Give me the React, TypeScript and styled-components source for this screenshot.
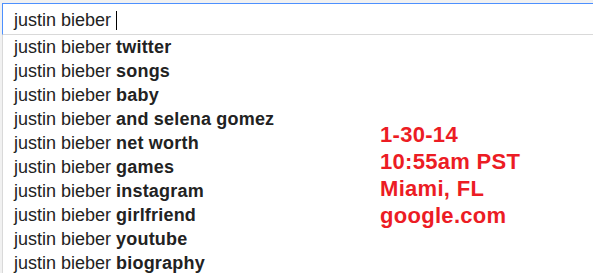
import React from "react";
import styled, { createGlobalStyle } from "styled-components";

const Global = createGlobalStyle`
  html, body { margin: 0; padding: 0; background: #fff; }
  body { font-family: Arial, "Liberation Sans", sans-serif; }
`;

const Page = styled.div`
  position: relative;
  width: 593px;
  height: 273px;
  overflow: hidden;
  background: #f1f1f1;
  padding: 3px 0 0 2px;
  box-sizing: border-box;
`;

const Panel = styled.div`
  background: #fff;
  display: flex;
  flex-direction: column;
  height: 100%;
`;

const SearchBox = styled.div`
  height: 32px;
  flex: none;
  box-sizing: border-box;
  padding: 2px 0 0 11px;
  border-top: 1px solid #4d90fe;
  border-left: 1px solid #4d90fe;
  border-bottom: 1px solid #d9d9d9;
  display: flex;
  align-items: center;
  font-size: 18px;
  color: #222;
`;

const Caret = styled.span`
  display: inline-block;
  width: 1px;
  height: 19px;
  background: #000;
  margin-left: 5px;
`;

const List = styled.ul`
  list-style: none;
  margin: 0;
  padding: 0;
  border-left: 1px solid #d9d9d9;
  flex: 1;
`;

const Item = styled.li`
  height: 24px;
  line-height: 24px;
  padding-left: 11px;
  font-size: 18px;
  color: #222;
  white-space: nowrap;
`;

const Bold = styled.b`
  font-weight: bold;
  letter-spacing: 0.2px;
`;

const Note = styled.div`
  position: absolute;
  left: 380px;
  top: 121px;
  color: #ec1c24;
  font-weight: bold;
  font-size: 22px;
  letter-spacing: 0.3px;
  line-height: 27px;
`;

const suggestions = [
  "twitter",
  "songs",
  "baby",
  "and selena gomez",
  "net worth",
  "games",
  "instagram",
  "girlfriend",
  "youtube",
  "biography",
];

export default function App() {
  return (
    <>
      <Global />
      <Page>
        <Panel>
          <SearchBox>
            justin bieber
            <Caret />
          </SearchBox>
          <List>
            {suggestions.map((s) => (
              <Item key={s}>
                justin bieber <Bold>{s}</Bold>
              </Item>
            ))}
          </List>
        </Panel>
        <Note>
          1-30-14
          <br />
          10:55am PST
          <br />
          Miami, FL
          <br />
          google.com
        </Note>
      </Page>
    </>
  );
}
